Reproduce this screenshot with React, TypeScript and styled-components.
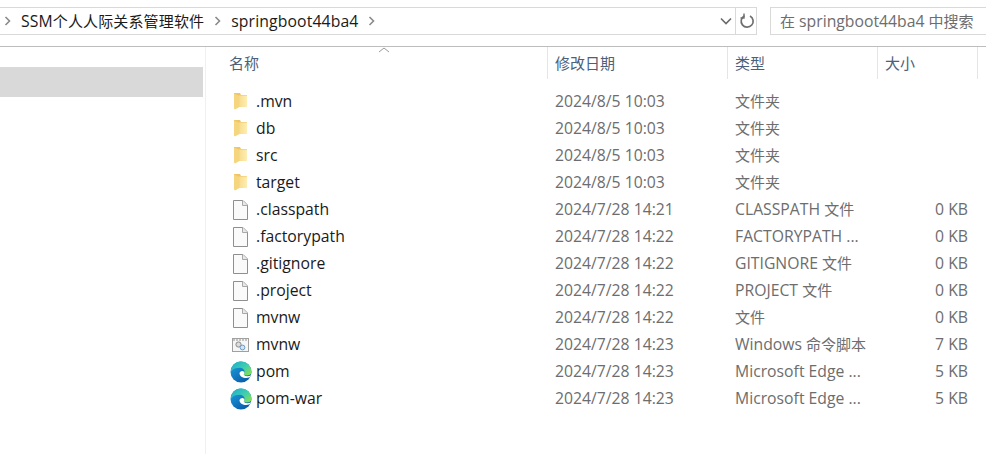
import React from 'react';
import styled, { createGlobalStyle } from 'styled-components';

type Kind = 'folder' | 'file' | 'script' | 'edge';

interface FileRow {
  name: string;
  date: string;
  type: string;
  size: string;
  kind: Kind;
}

const files: FileRow[] = [
  { name: '.mvn', date: '2024/8/5 10:03', type: '文件夹', size: '', kind: 'folder' },
  { name: 'db', date: '2024/8/5 10:03', type: '文件夹', size: '', kind: 'folder' },
  { name: 'src', date: '2024/8/5 10:03', type: '文件夹', size: '', kind: 'folder' },
  { name: 'target', date: '2024/8/5 10:03', type: '文件夹', size: '', kind: 'folder' },
  { name: '.classpath', date: '2024/7/28 14:21', type: 'CLASSPATH 文件', size: '0 KB', kind: 'file' },
  { name: '.factorypath', date: '2024/7/28 14:22', type: 'FACTORYPATH ...', size: '0 KB', kind: 'file' },
  { name: '.gitignore', date: '2024/7/28 14:22', type: 'GITIGNORE 文件', size: '0 KB', kind: 'file' },
  { name: '.project', date: '2024/7/28 14:22', type: 'PROJECT 文件', size: '0 KB', kind: 'file' },
  { name: 'mvnw', date: '2024/7/28 14:22', type: '文件', size: '0 KB', kind: 'file' },
  { name: 'mvnw', date: '2024/7/28 14:23', type: 'Windows 命令脚本', size: '7 KB', kind: 'script' },
  { name: 'pom', date: '2024/7/28 14:23', type: 'Microsoft Edge ...', size: '5 KB', kind: 'edge' },
  { name: 'pom-war', date: '2024/7/28 14:23', type: 'Microsoft Edge ...', size: '5 KB', kind: 'edge' },
];

const GlobalStyle = createGlobalStyle`
  html, body {
    margin: 0;
    background: #ffffff;
  }
  body {
    font-family: "Open Sans", "Noto Sans CJK SC", sans-serif;
    font-size: 15.75px;
  }
`;

const Window = styled.div`
  width: 986px;
  height: 454px;
  overflow: hidden;
  background: #fff;
`;

const AddressRow = styled.div`
  display: flex;
  padding-top: 7px;
  box-sizing: border-box;
  border-bottom: 1px solid #bdbdbd;
  height: 47px;
`;

const PathBox = styled.div`
  width: 757px;
  height: 28px;
  box-sizing: border-box;
  display: flex;
  align-items: center;
  border: 1px solid #d9d9d9;
  border-left: none;
`;

const Crumbs = styled.div`
  flex: 1;
  display: flex;
  align-items: center;
  gap: 10px;
  padding-left: 4px;
  color: #1a1a1a;
  letter-spacing: 0.13px;
`;

const Crumb = styled.span`
  line-height: 26px;
`;

const Han = styled.span`
  font-size: 15px;
`;

const PathButton = styled.div`
  width: 19px;
  height: 26px;
  padding-left: 2px;
  display: flex;
  align-items: center;
  justify-content: center;
`;

const RefreshButton = styled(PathButton)`
  border-left: 1px solid #d9d9d9;
  width: 18px;
`;

const SearchBox = styled.div`
  margin-left: 13px;
  flex: 1;
  height: 28px;
  box-sizing: border-box;
  border: 1px solid #d9d9d9;
  border-right: none;
  padding-left: 9px;
  line-height: 26px;
  color: #6d6d6d;
  white-space: nowrap;
`;

const Body = styled.div`
  display: flex;
  height: 407px;
`;

const Sidebar = styled.div`
  width: 206px;
  flex-shrink: 0;
  padding-top: 20px;
  box-sizing: border-box;
  border-right: 1px solid #f0f0f0;
`;

const SidebarSelected = styled.div`
  width: 203px;
  height: 30px;
  background: #d9d9d9;
`;

const Content = styled.div`
  flex: 1;
  min-width: 0;
  position: relative;
`;

const columns = '342px 180px 150px 100px';

const HeaderRow = styled.div`
  display: grid;
  grid-template-columns: ${columns};
  height: 32px;
  margin-bottom: 9px;
`;

const HeaderCell = styled.div`
  padding-left: 7px;
  border-right: 1px solid #e5e5e5;
  line-height: 32px;
  color: #4c607a;
  &:first-child {
    padding-left: 23px;
  }
`;

const SortCaret = styled.svg`
  position: absolute;
  left: 172px;
  top: 0;
`;

const Row = styled.div`
  display: grid;
  grid-template-columns: ${columns};
  height: 27px;
  line-height: 27px;
  color: #6d6d6d;
`;

const NameCell = styled.div`
  display: flex;
  align-items: center;
  padding-left: 24px;
  color: #1a1a1a;
`;

const IconSlot = styled.div`
  width: 26px;
  height: 27px;
  display: flex;
  align-items: center;
  flex-shrink: 0;
`;

const Cell = styled.div`
  padding-left: 7px;
  white-space: nowrap;
`;

const SizeCell = styled.div`
  text-align: right;
  padding-right: 10px;
  white-space: nowrap;
`;

// Chinese runs stay at 15px, the wider Latin runs get the larger body size
const Mixed = ({ text }: { text: string }) => (
  <>
    {text.split(/([\u4e00-\u9fff]+)/).map((part, i) =>
      i % 2 === 1 ? <Han key={i}>{part}</Han> : part
    )}
  </>
);

const Chevron = () => (
  <svg width="7" height="10" viewBox="0 0 7 10">
    <path d="M1.5 1 L5.5 5 L1.5 9" fill="none" stroke="#8a8a8a" strokeWidth="1.6" />
  </svg>
);

const FolderIcon = () => (
  <svg width="20" height="20" viewBox="0 0 20 20">
    <defs>
      <linearGradient id="folderFill" x1="0" x2="1" y1="0" y2="0">
        <stop offset="0" stopColor="#f8dc8c" />
        <stop offset="1" stopColor="#fdeeb4" />
      </linearGradient>
    </defs>
    <path d="M4 1 H10 L11 3 H17 V15 H4 Z" fill="#efc565" />
    <path d="M9 3.5 H17 V15 H9 Z" fill="url(#folderFill)" />
    <path d="M4 1.5 L9.5 4 V15 L5 17.5 L4 16.5 Z" fill="#f5d57e" />
  </svg>
);

const FileIcon = () => (
  <svg width="20" height="20" viewBox="0 0 20 20">
    <path d="M3.5 0.5 H13 L17.5 5 V19.5 H3.5 Z" fill="#fafafa" stroke="#8f8f8f" />
    <path d="M12.5 0.5 V5.5 H17.5" fill="#e8e8e8" stroke="#a8a8a8" />
  </svg>
);

const ScriptIcon = () => (
  <svg width="20" height="16" viewBox="0 0 20 16">
    <rect x="2.5" y="1.5" width="16" height="13" fill="#f6f6f6" stroke="#a0a0a0" />
    <path d="M3 3 H18" stroke="#8f8f8f" strokeDasharray="2 1" />
    <circle cx="8.5" cy="7.5" r="2.6" fill="#dcdcdc" stroke="#8a8a8a" />
    <circle cx="12.5" cy="10.5" r="2.4" fill="#cfe3f3" stroke="#6f9cc4" />
  </svg>
);

const EdgeIcon = () => (
  <svg width="22" height="22" viewBox="0 0 22 22">
    <defs>
      <linearGradient id="edgeBlue" x1="0" y1="0" x2="0.7" y2="1">
        <stop offset="0" stopColor="#1ca6e6" />
        <stop offset="1" stopColor="#0b5aa8" />
      </linearGradient>
      <linearGradient id="edgeGreen" x1="0" y1="0" x2="1" y2="0.8">
        <stop offset="0" stopColor="#1fa9cf" />
        <stop offset="0.6" stopColor="#3fcfae" />
        <stop offset="1" stopColor="#86dd55" />
      </linearGradient>
    </defs>
    <circle cx="11" cy="11" r="10.5" fill="url(#edgeBlue)" />
    <path d="M1 8.5 C2.5 3 6.5 0.5 11 0.5 C17 0.5 21.5 5 21.5 11 C21.5 13.5 19.5 14.5 16.5 14.5 C14.8 14.5 13.8 14 13.7 13.3 C15.6 10.8 14 6.8 10 6.8 C6 6.8 3 7.8 1 10.5 Z" fill="url(#edgeGreen)" />
    <path d="M9.5 12 C10.2 10 12.8 9.4 14 10.8 C14.7 11.7 14.4 12.7 13.7 13.3 C14.5 15.6 18 15.9 21.2 14.2 C20.6 15.3 19.9 16 19 16.6 C15 18 9.2 16 9.5 12 Z" fill="#ffffff" />
  </svg>
);

const icons: Record<Kind, React.FC> = {
  folder: FolderIcon,
  file: FileIcon,
  script: ScriptIcon,
  edge: EdgeIcon,
};

function App() {
  return (
    <Window>
      <GlobalStyle />
      <AddressRow>
        <PathBox>
          <Crumbs>
            <Chevron />
            <Crumb>
              <Mixed text="SSM个人人际关系管理软件" />
            </Crumb>
            <Chevron />
            <Crumb>springboot44ba4</Crumb>
            <Chevron />
          </Crumbs>
          <PathButton>
            <svg width="12" height="8" viewBox="0 0 12 8">
              <path d="M1 1.5 L6 6.5 L11 1.5" fill="none" stroke="#6a6a6a" strokeWidth="1.6" />
            </svg>
          </PathButton>
          <RefreshButton>
            <svg width="16" height="16" viewBox="0 0 16 16">
              <path d="M5.5 2.8 A6 6 0 1 0 11 2.9" fill="none" stroke="#6f6f6f" strokeWidth="1.7" />
              <path d="M5 0.5 V5 H1.5" fill="none" stroke="#6f6f6f" strokeWidth="1.4" />
            </svg>
          </RefreshButton>
        </PathBox>
        <SearchBox>
          <Mixed text="在 springboot44ba4 中搜索" />
        </SearchBox>
      </AddressRow>
      <Body>
        <Sidebar>
          <SidebarSelected />
        </Sidebar>
        <Content>
          <SortCaret width="12" height="6" viewBox="0 0 12 6">
            <path d="M1 5 L6 1 L11 5" fill="none" stroke="#9a9a9a" />
          </SortCaret>
          <HeaderRow>
            <HeaderCell><Han>名称</Han></HeaderCell>
            <HeaderCell><Han>修改日期</Han></HeaderCell>
            <HeaderCell><Han>类型</Han></HeaderCell>
            <HeaderCell><Han>大小</Han></HeaderCell>
          </HeaderRow>
          {files.map((f, i) => {
            const Icon = icons[f.kind];
            return (
              <Row key={i}>
                <NameCell>
                  <IconSlot>
                    <Icon />
                  </IconSlot>
                  {f.name}
                </NameCell>
                <Cell>{f.date}</Cell>
                <Cell>
                  <Mixed text={f.type} />
                </Cell>
                <SizeCell>{f.size}</SizeCell>
              </Row>
            );
          })}
        </Content>
      </Body>
    </Window>
  );
}

export default App;
